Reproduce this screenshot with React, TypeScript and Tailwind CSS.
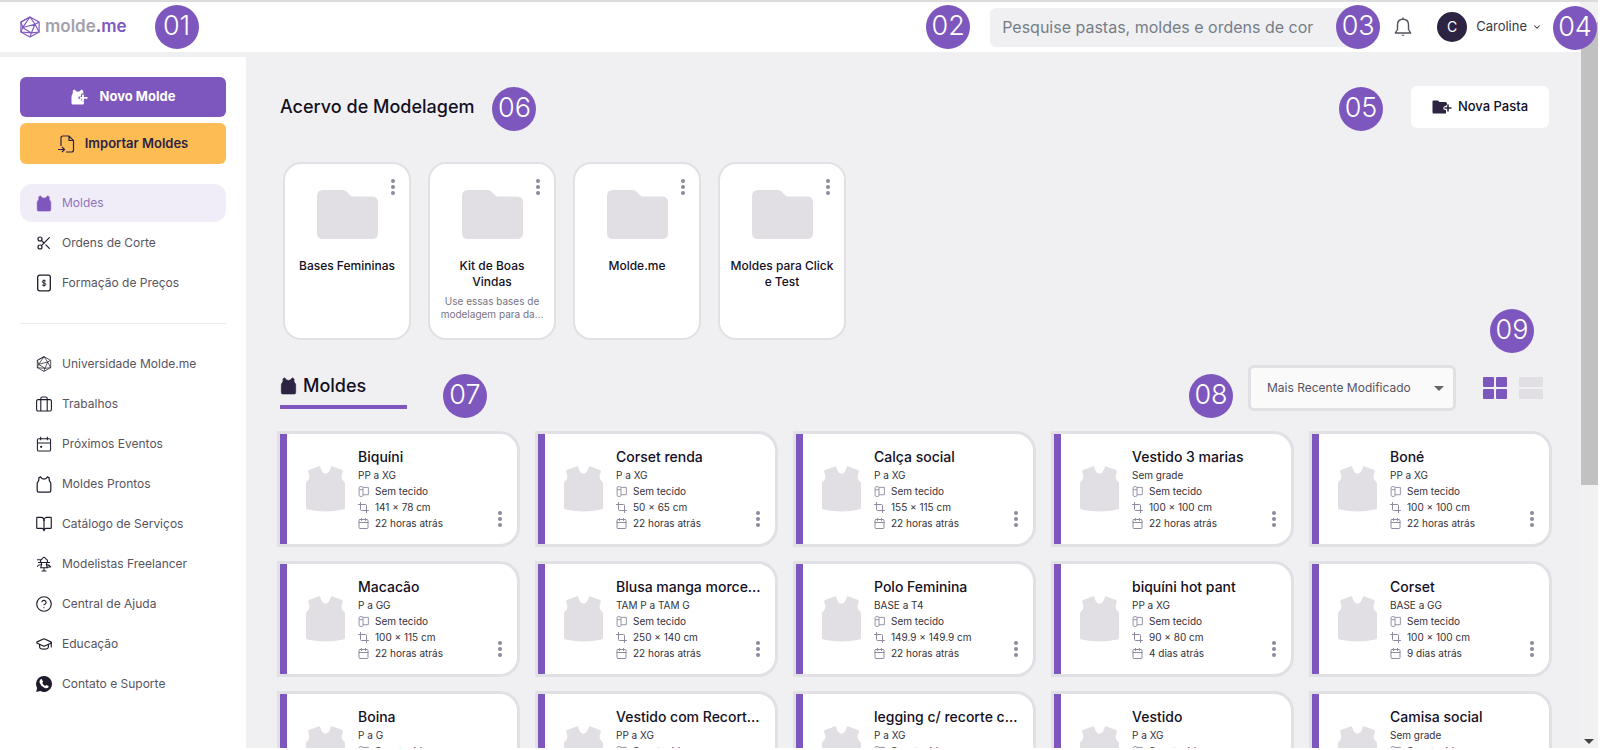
import React from 'react';
import {
  BookOpen,
  Calendar,
  ChevronDown,
  CircleHelp,
  Crop,
  GraduationCap,
  Scissors,
  Search,
} from 'lucide-react';

const VEST =
  'M13 .3L3 4Q1.800 4.600 2.200 6L3.300 9.500Q3.800 13 1.500 15L.6 15.800Q0 16.500 0 18V42Q0 43.200 1.500 43.600Q19.500 47.500 37.500 43.600Q39 43.200 39 42V18Q39 16.500 38.400 15.800L37.500 15Q35.200 13 35.700 9.500L36.800 6Q37.200 4.600 36 4L26 .3Q25.200 0 24.800 1C23.500 5 22.500 7.500 19.500 7.500C16.500 7.500 15.500 5 14.200 1Q13.800 0 13 .3Z';

const Vest = ({ className }: { className?: string }) => (
  <svg viewBox="0 0 39 46" className={className} fill="currentColor" aria-hidden="true">
    <path d={VEST} />
  </svg>
);

// Filled body with the two small straps, used by the menu and the headings
const Tank = ({ className, outline }: { className?: string; outline?: boolean }) => (
  <svg
    viewBox="0 0 16 18"
    className={className}
    fill={outline ? 'none' : 'currentColor'}
    stroke="currentColor"
    strokeWidth={outline ? 1.3 : 0.6}
    strokeLinejoin="round"
    aria-hidden="true"
  >
    <path d="M4.200 .8L2.400 2Q3 4.500 1.800 5.800Q.8 6.800 .8 8V15.500Q.8 17 2.300 17H13.700Q15.200 17 15.200 15.500V8Q15.200 6.800 14.200 5.800Q13 4.500 13.600 2L11.800 .8Q10.500 3.400 8 3.400Q5.500 3.400 4.200 .8Z" />
  </svg>
);

const Gem = ({ className, width }: { className?: string; width: number }) => (
  <svg
    viewBox="0 0 22 24"
    className={className}
    fill="none"
    stroke="currentColor"
    strokeWidth={width}
    strokeLinejoin="round"
    aria-hidden="true"
  >
    <path d="M11 1L21 6.500V17.500L11 23L1 17.500V6.500Z" />
    <path d="M16.500 9L3 12.500L12.500 18.500ZM11 1L3 12.500M11 1L16.500 9L21 6.500M1 6.500L3 12.500L1 17.500L12.500 18.500L11 23M12.500 18.500L21 17.500L16.500 9M11 1L1 6.500" />
  </svg>
);

const Price = ({ className }: { className?: string }) => (
  <svg viewBox="0 0 16 18" className={className} fill="none" stroke="currentColor" strokeWidth="1.300" aria-hidden="true">
    <rect x="1.700" y="1.200" width="12.600" height="15.600" rx="2" />
    <path
      strokeWidth="1"
      d="M9.800 7.200Q9.200 6.500 8 6.500Q6.300 6.500 6.300 7.700Q6.300 8.800 8 9Q9.800 9.200 9.800 10.400Q9.800 11.600 8 11.600Q6.800 11.600 6.200 10.800M8 5.500V12.500"
    />
  </svg>
);

const Case = ({ className }: { className?: string }) => (
  <svg viewBox="0 0 16 16" className={className} fill="none" stroke="currentColor" strokeWidth="1.100" aria-hidden="true">
    <rect x=".6" y="3.600" width="14.800" height="11.400" rx="1.500" />
    <path d="M4.800 15V2.600Q4.800 1 6.200 1H9.800Q11.200 1 11.200 2.600V15" />
  </svg>
);

const Agenda = ({ className }: { className?: string }) => (
  <svg viewBox="0 0 16 17" className={className} fill="none" stroke="currentColor" strokeWidth="1.100" aria-hidden="true">
    <rect x="1" y="3" width="14" height="13" rx="1.500" />
    <path d="M1 7.500H15M4.500 .8V4.500M11.500 .8V4.500" />
    <circle cx="5" cy="11.500" r="1.200" fill="currentColor" stroke="none" />
  </svg>
);

const Mannequin = ({ className }: { className?: string }) => (
  <svg viewBox="0 0 16 17" className={className} fill="none" stroke="currentColor" strokeWidth="1.100" strokeLinecap="round" aria-hidden="true">
    <path d="M5 4L6.500 2.500Q8 0 9.500 2.500L11 4Q12.500 5 11 7L10.500 9L11.500 12.500H4.500L5.500 9L5 7Q3.500 5 5 4ZM1 4H5M1 11Q2.500 8.500 5.500 9.500M2 7H14M10.500 9.500Q13.500 9 15 11.500L12 12M8 12.500V16M5.800 16H10.200" />
  </svg>
);

const WhatsApp = ({ className }: { className?: string }) => (
  <svg viewBox="0 0 16 16" className={className} aria-hidden="true">
    <path fill="currentColor" d="M8 0A8 8 0 1 1 4.300 15.100L.2 16L1.100 12A8 8 0 0 1 8 0Z" />
    <path fill="#fff" d="M4.200 3.700Q5 2.700 5.800 3.300L7 5.500Q7 6.200 6.200 7Q7.200 9 9.100 9.900L10.200 8.900L12.500 10Q13 10.600 12.200 11.600Q10.800 12.900 8.400 11.800Q5 10.200 3.700 7Q3 5 4.200 3.700Z" />
  </svg>
);

const Bell = ({ className }: { className?: string }) => (
  <svg viewBox="0 0 18 20" className={className} fill="none" stroke="currentColor" strokeWidth="1.400" strokeLinejoin="round" aria-hidden="true">
    <path d="M9 2.200C5.500 2.200 3.500 4.600 3.500 7.800V12.500L1.300 16H16.700L14.500 12.500V7.800C14.500 4.600 12.500 2.200 9 2.200ZM9 .5V2.200" />
    <path d="M7.200 17.800Q9 20 10.800 17.800Z" fill="currentColor" stroke="none" />
  </svg>
);

const Fabric = ({ className }: { className?: string }) => (
  <svg viewBox="0 0 12 12" className={className} fill="none" stroke="currentColor" aria-hidden="true">
    <path d="M1.500 4H5.500V10Q5.500 11.500 3.500 11.500Q1.200 11.500 1.200 10V2Q1.200 .6 3.300 .6Q5.500 .6 5.500 2V4M5.500 1.500H11.300V9.500H5.500" />
  </svg>
);

const Dots = ({ className }: { className?: string }) => (
  <svg viewBox="0 0 4 16" className={className} fill="#8d8aa1" aria-hidden="true">
    <circle cx="2" cy="2" r="2" />
    <circle cx="2" cy="8" r="2" />
    <circle cx="2" cy="14" r="2" />
  </svg>
);

const Marker = ({ label, className = '' }: { label: string; className?: string }) => (
  <span
    className={`flex h-11 w-11 shrink-0 items-center justify-center rounded-full bg-[#7e57be] pb-[3px] text-[27px] leading-none font-light text-white ${className}`}
  >
    {label}
  </span>
);

const mainMenu = [
  { label: 'Moldes', icon: <Tank className="h-[17px] w-4" />, active: true },
  { label: 'Ordens de Corte', icon: <Scissors className="h-4 w-4" strokeWidth={1.8} /> },
  { label: 'Formação de Preços', icon: <Price className="h-[18px] w-4" /> },
];

const extraMenu = [
  { label: 'Universidade Molde.me', icon: <Gem className="h-4 w-4" width={1.1} /> },
  { label: 'Trabalhos', icon: <Case className="h-4 w-4" /> },
  { label: 'Próximos Eventos', icon: <Agenda className="h-4 w-4" /> },
  { label: 'Moldes Prontos', icon: <Tank className="h-[17px] w-4" outline /> },
  { label: 'Catálogo de Serviços', icon: <BookOpen className="h-4 w-4" viewBox="1 1 22 22" strokeWidth={1.6} /> },
  { label: 'Modelistas Freelancer', icon: <Mannequin className="h-4 w-4" /> },
  { label: 'Central de Ajuda', icon: <CircleHelp className="h-4 w-4" viewBox="1 1 22 22" strokeWidth={1.6} /> },
  { label: 'Educação', icon: <GraduationCap className="h-4 w-4" viewBox="1 1 22 22" strokeWidth={1.6} /> },
  { label: 'Contato e Suporte', icon: <WhatsApp className="h-4 w-4" /> },
];

const folders = [
  { name: 'Bases Femininas' },
  { name: 'Kit de Boas Vindas', text: 'Use essas bases de modelagem para da...' },
  { name: 'Molde.me' },
  { name: 'Moldes para Click e Test' },
];

const patterns = [
  { name: 'Biquíni', grade: 'PP a XG', size: '141 × 78 cm', time: '22 horas atrás' },
  { name: 'Corset renda', grade: 'P a XG', size: '50 × 65 cm', time: '22 horas atrás' },
  { name: 'Calça social', grade: 'P a XG', size: '155 × 115 cm', time: '22 horas atrás' },
  { name: 'Vestido 3 marias', grade: 'Sem grade', size: '100 × 100 cm', time: '22 horas atrás' },
  { name: 'Boné', grade: 'PP a XG', size: '100 × 100 cm', time: '22 horas atrás' },
  { name: 'Macacão', grade: 'P a GG', size: '100 × 115 cm', time: '22 horas atrás' },
  { name: 'Blusa manga morce...', grade: 'TAM P a TAM G', size: '250 × 140 cm', time: '22 horas atrás' },
  { name: 'Polo Feminina', grade: 'BASE a T4', size: '149.9 × 149.9 cm', time: '22 horas atrás' },
  { name: 'biquíni hot pant', grade: 'PP a XG', size: '90 × 80 cm', time: '4 dias atrás' },
  { name: 'Corset', grade: 'BASE a GG', size: '100 × 100 cm', time: '9 dias atrás' },
  { name: 'Boina', grade: 'P a G', size: '100 × 100 cm', time: '9 dias atrás' },
  { name: 'Vestido com Recort...', grade: 'PP a XG', size: '100 × 100 cm', time: '9 dias atrás' },
  { name: 'legging c/ recorte c...', grade: 'P a XG', size: '100 × 100 cm', time: '9 dias atrás' },
  { name: 'Vestido', grade: 'P a XG', size: '100 × 100 cm', time: '9 dias atrás' },
  { name: 'Camisa social', grade: 'Sem grade', size: '100 × 100 cm', time: '9 dias atrás' },
];

type MenuItem = { label: string; icon: React.ReactNode; active?: boolean };

const Menu = ({ items }: { items: MenuItem[] }) => (
  <ul>
    {items.map((item) => (
      <li key={item.label} className="py-px">
        <a
          href="#"
          className={`flex h-[38px] items-center gap-[10px] rounded-xl pl-4 text-xs ${
            item.active ? 'bg-[#f1edf8] text-[#7e57be]' : 'text-[#1f1b2b]'
          }`}
        >
          {item.icon}
          <span className={item.active ? 'text-[#8f74bd]' : 'text-[#57545f]'}>{item.label}</span>
        </a>
      </li>
    ))}
  </ul>
);

const Header = () => (
  <header className="flex h-[52px] shrink-0 items-center border-t-2 border-[#dcdcdc] bg-white pr-[38px] pl-5">
    <a href="#" className="mr-7 flex items-center gap-[5px] text-[17px] font-semibold text-[#a3a1ac]">
      <Gem className="h-6 w-5 text-[#7e57be]" width={1.3} />
      <span>
        molde<span className="text-[#7e57be]">.me</span>
      </span>
    </a>
    <Marker label="01" />
    <Marker label="02" className="ml-auto" />
    <div className="relative ml-5 flex h-[39px] w-[368px] items-center rounded-md bg-[#f0f0f3]">
      <input
        type="text"
        aria-label="Pesquisar"
        placeholder="Pesquise pastas, moldes e ordens de cor"
        className="h-full w-[346px] bg-transparent pl-3 text-base text-[#2d2342] outline-none placeholder:text-[#757e86]"
      />
      <Search className="h-5 w-5 text-[#2d2342]" />
      <Marker label="03" className="absolute -right-[22px]" />
    </div>
    <button type="button" aria-label="Notificações" className="ml-9">
      <Bell className="h-5 w-[18px] text-[#55525c]" />
    </button>
    <button type="button" className="ml-[25px] flex items-center text-[13px] text-[#3a3745]">
      <span className="mr-[9px] flex h-[30px] w-[30px] items-center justify-center rounded-full bg-[#2d2342] text-sm text-white">
        C
      </span>
      Caroline
      <ChevronDown className="ml-[5px] h-[10px] w-[10px]" strokeWidth={2.5} />
    </button>
  </header>
);

const Sidebar = () => (
  <aside className="mt-[5px] w-[246px] shrink-0 bg-white px-5 pt-5">
    <button
      type="button"
      className="flex h-10 w-full items-center justify-center gap-3 rounded-md bg-[#7e57be] text-[13px] font-bold text-white"
    >
      <svg viewBox="0 0 17 16" className="h-4 w-[17px]" aria-hidden="true">
        <path
          fill="currentColor"
          d="M3.600 .5L1.800 1.600Q2.200 4.500 1.200 5.600Q.5 6.500 .5 8V14Q.5 15.500 2 15.500H11.500Q13 15.500 13 14V12.500L10.500 12V10H7.500V7.500H10V5L12.500 4L12 1.600L10.200 .5Q9 2.800 7 2.800Q5 2.800 3.600 .5Z"
        />
        <path stroke="currentColor" strokeWidth="1.800" d="M12 5.500V12M8.800 8.800H16.500" />
      </svg>
      Novo Molde
    </button>
    <button
      type="button"
      className="mt-[6px] flex h-[41px] w-full items-center justify-center gap-[10px] rounded-md bg-[#fdbd54] text-[13px] font-semibold text-[#2d2342]"
    >
      <svg viewBox="0 0 17 18" className="h-[18px] w-[17px]" fill="none" stroke="currentColor" strokeWidth="1.200" aria-hidden="true">
        <path d="M3 11V3Q3 1 5 1H11L15.500 5.500V15Q15.500 17 13.500 17H8M11 1V5.500H15.500M0 14.500H6.500M4 12L6.500 14.500L4 17" />
      </svg>
      Importar Moldes
    </button>
    <nav className="mt-[19px]">
      <Menu items={mainMenu} />
      <hr className="mt-5 mb-5 border-[#ececef]" />
      <Menu items={extraMenu} />
    </nav>
  </aside>
);

const Folder = ({ name, text }: { name: string; text?: string }) => (
  <article className="relative flex h-[178px] w-32 flex-col items-center rounded-[18px] border-2 border-[#e1e0e5] bg-white px-2 pt-[26px] text-center">
    <button type="button" aria-label={`Opções de ${name}`} className="absolute top-[15px] right-[14px]">
      <Dots className="h-4 w-1" />
    </button>
    <svg viewBox="0 0 61 49" className="h-[49px] w-[61px]" fill="#e1dfe4" aria-hidden="true">
      <path d="M6 0H26Q28 0 29.500 1.500L33 5Q34.500 6.500 36 6.500H55Q61 6.500 61 12.500V43Q61 49 55 49H6Q0 49 0 43V6Q0 0 6 0Z" />
    </svg>
    <h2 className="mt-[19px] max-w-[104px] text-xs leading-4 font-medium text-[#14101f]">{name}</h2>
    {text && <p className="mt-[5px] text-[10px] leading-[13px] text-[#77747f]">{text}</p>}
  </article>
);

const Pattern = ({ name, grade, size, time }: (typeof patterns)[number]) => (
  <article className="flex h-[116px] min-w-0 rounded-r-[20px] border-[3px] border-[#e1e0e5] bg-white">
    <div className="w-[7px] shrink-0 bg-[#7e57be]" />
    <Vest className="mt-8 ml-[19px] h-[46px] w-[39px] shrink-0 text-[#e1dfe4]" />
    <div className="ml-[13px] min-w-0 flex-1 pt-[13px] text-[10px] leading-4 text-[#34313c]">
      <h3 className="text-sm leading-5 font-medium whitespace-nowrap text-[#14101f]">{name}</h3>
      <p>{grade}</p>
      <p className="flex items-center gap-[6px]">
        <Fabric className="h-[11px] w-[11px] text-[#8d8aa1]" />
        Sem tecido
      </p>
      <p className="flex items-center gap-[6px]">
        <Crop className="h-[11px] w-[11px] text-[#8d8aa1]" viewBox="1 1 22 22" />
        {size}
      </p>
      <p className="flex items-center gap-[6px]">
        <Calendar className="h-[11px] w-[11px] text-[#8d8aa1]" viewBox="1 1 22 22" />
        {time}
      </p>
    </div>
    <button type="button" aria-label={`Opções de ${name}`} className="mr-[15px] mb-[17px] self-end">
      <Dots className="h-4 w-1" />
    </button>
  </article>
);

const Toolbar = () => (
  <div className="mt-[18px] flex items-center">
    <div className="ml-[3px] flex h-[42px] w-[127px] items-center gap-[6px] border-b-4 border-[#7e57be] text-lg font-medium text-[#14101f]">
      <Tank className="h-[18px] w-[17px] text-[#2d2342]" />
      <h2>Moldes</h2>
    </div>
    <Marker label="07" className="mt-4 ml-9" />
    <Marker label="08" className="mt-4 ml-auto" />
    <div className="relative ml-[15px]">
      <select
        aria-label="Ordenar por"
        className="h-[46px] w-[208px] appearance-none rounded-md border-[3px] border-[#e1e0e5] bg-[#fafafa] pl-4 text-xs text-[#57545f]"
      >
        <option>Mais Recente Modificado</option>
      </select>
      <svg viewBox="0 0 10 5" className="pointer-events-none absolute top-[21px] right-3 h-[5px] w-[10px]" fill="#666" aria-hidden="true">
        <path d="M0 0H10L5 5Z" />
      </svg>
    </div>
    <div className="relative mr-[9px] ml-[27px] flex gap-3">
      <Marker label="09" className="absolute -top-[68px] left-[7px]" />
      <button type="button" aria-label="Ver em grade">
        <svg viewBox="0 0 24 22" className="h-[22px] w-6" fill="#7e57be" aria-hidden="true">
          <rect width="11" height="10" rx="1" />
          <rect x="13" width="11" height="10" rx="1" />
          <rect y="12" width="11" height="10" rx="1" />
          <rect x="13" y="12" width="11" height="10" rx="1" />
        </svg>
      </button>
      <button type="button" aria-label="Ver em lista">
        <svg viewBox="0 0 24 22" className="h-[22px] w-6" fill="#e1dfe4" aria-hidden="true">
          <rect width="24" height="10" rx="1" />
          <rect y="12" width="24" height="10" rx="1" />
        </svg>
      </button>
    </div>
  </div>
);

const App = () => {
  return (
    <div className="flex h-screen overflow-hidden bg-white pr-[2px] pb-[2px] font-['Inter',sans-serif]">
      <div className="flex min-w-0 flex-1 flex-col bg-[#f0f0f3]">
        <Header />
        <div className="flex min-h-0 flex-1">
          <Sidebar />
          <main className="min-w-0 flex-1 overflow-hidden pt-[33px] pr-7 pl-[31px]">
            <div className="flex h-11 items-center pr-[3px] pl-[3px]">
              <h1 className="text-lg font-medium text-[#14101f]">Acervo de Modelagem</h1>
              <Marker label="06" className="mt-1 ml-[18px]" />
              <Marker label="05" className="mt-1 ml-auto" />
              <button
                type="button"
                className="ml-7 flex h-[42px] w-[138px] items-center justify-center gap-[6px] rounded-md bg-white text-[13px] font-medium text-[#14101f]"
              >
                <svg viewBox="0 0 20 14" className="h-[14px] w-5" aria-hidden="true">
                  <path fill="#2d2342" d="M1.500 .5H6L7.500 2H13.500Q15 2 15 3.500V5L11.500 7V9.500L14 10V13.500H1.500Q.5 13.500 .5 12V1.500Q.5 .5 1.500 .5Z" />
                  <path stroke="#2d2342" strokeWidth="1.600" d="M16 4.500V11.500M12.500 8H19.500" />
                </svg>
                Nova Pasta
              </button>
            </div>
            <section className="mt-[33px] flex flex-wrap gap-[17px] pl-[6px]">
              {folders.map((folder) => (
                <Folder key={folder.name} {...folder} />
              ))}
            </section>
            <Toolbar />
            <section className="mt-[13px] grid grid-cols-5 gap-x-[15px] gap-y-[14px]">
              {patterns.map((pattern) => (
                <Pattern key={pattern.name} {...pattern} />
              ))}
            </section>
          </main>
        </div>
      </div>
      {/* Scroll track */}
      <div className="relative flex w-[18px] shrink-0 flex-col items-center justify-between border-t-2 border-[#dcdcdc] bg-[#f1f1f1]">
        <div className="mt-5 h-[463px] w-[17px] bg-[#c1c1c1]" />
        <svg viewBox="0 0 10 5" className="mb-1 h-[5px] w-[10px]" fill="#444" aria-hidden="true">
          <path d="M0 0H10L5 5Z" />
        </svg>
        <Marker label="04" className="absolute top-1 right-px" />
      </div>
    </div>
  );
};

export default App;
